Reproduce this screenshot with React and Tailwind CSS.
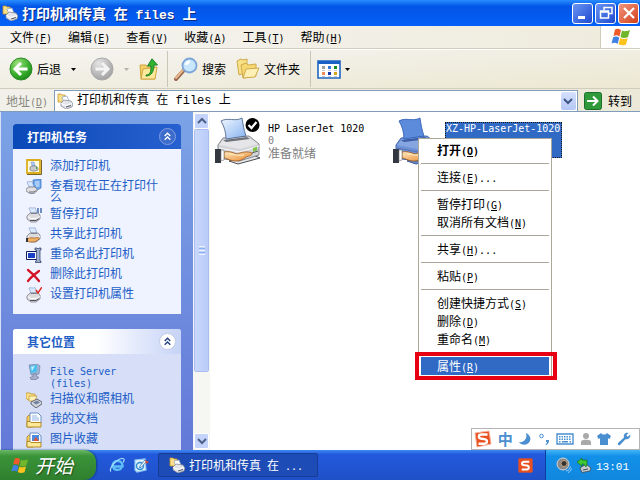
import React from "react";

const CJK = "font-['Noto_Sans_CJK_SC',sans-serif]";

/* Chinese text with Latin runs set in a half-width monospace face. "_x" marks an underlined access key. */
function Mixed({ text, latin = "text-[10px] font-['DejaVu_Sans_Mono',monospace]" }) {
  const runs = text.match(/[\x20-\x7e]+|[^\x20-\x7e]+/g) || [];
  return (
    <>
      {runs.map((run, i) => {
        if (!/^[\x20-\x7e]/.test(run)) return <span key={i}>{run}</span>;
        const [before, after] = run.split("_");
        return (
          <span key={i} className={`leading-[0px] ${latin}`}>
            {before}
            {after && (
              <>
                <u className="underline-offset-1">{after[0]}</u>
                {after.slice(1)}
              </>
            )}
          </span>
        );
      })}
    </>
  );
}

function PrinterFolderIcon({ className = "size-4" }) {
  return (
    <svg viewBox="0 0 16 16" className={`shrink-0 ${className}`} aria-hidden="true">
      <path d="M1 1h3l1 1h3v7H1z" fill="#fbe08a" stroke="#c9952c" strokeWidth=".8" />
      <path d="M5 4l5-1 2 5-5 2z" fill="#fff" stroke="#8aa0c0" strokeWidth=".7" />
      <path d="M4 10l3-3 7 1 2 3-1 3-6 2-5-3z" fill="#e2e4ea" stroke="#7d818d" strokeWidth=".7" />
      <path d="M4 10.500l5 2 6-2" fill="none" stroke="#fff" />
      <path d="M9 14l5-1.500" stroke="#50545f" />
    </svg>
  );
}

function SmallPrinter({ children }) {
  return (
    <svg viewBox="0 0 16 16" className="size-4 shrink-0" aria-hidden="true">
      <path d="M3 1c2-1 4 1 6-.5L11 6H5z" fill="#dbe9ff" stroke="#8ba3cb" strokeWidth=".7" />
      <path d="M1 9l3-3h8l2 2v4l-4 3H5l-4-3z" fill="#dcdcdf" stroke="#7e7e88" strokeWidth=".8" />
      <path d="M2 9.500l3 2h5l4-2" fill="none" stroke="#fff" />
      <path d="M4 13.500h6l3-2" fill="none" stroke="#4f4f58" />
      <path d="M5 6.500h6" stroke="#70757f" strokeWidth=".8" />
      {children}
    </svg>
  );
}

function AddPrinterIcon() {
  return (
    <svg viewBox="0 0 16 16" className="size-4 shrink-0" aria-hidden="true">
      <path d="M1 1h13v13H1z" fill="#fffbe0" stroke="#dcae1e" strokeWidth="1.800" />
      <path d="M15.500 1v14.500H1" fill="none" stroke="#6a5415" strokeWidth=".9" />
      <path d="M5 3h3l1 4H6z" fill="#a9c9ff" stroke="#7a90b8" strokeWidth=".5" />
      <path d="M4 8l2-1h4l2 2v2l-3 1H6l-2-1z" fill="#c7c9ce" stroke="#737783" strokeWidth=".7" />
      <path d="M10 8h1v2h-1z" fill="#37b13d" />
    </svg>
  );
}

function QueueIcon() {
  return (
    <svg viewBox="0 0 16 16" className="size-4 shrink-0" aria-hidden="true">
      <path d="M7 1l8-1v9l-4 2-4-3z" fill="#6ba5ec" stroke="#3a70bd" strokeWidth=".7" />
      <path d="M9 3h4.500M9 5h4.500M10 7h3.500" stroke="#e7f2ff" />
      <path d="M1 3c2-1 3 0 5-.5L8 8H3z" fill="#dbe9ff" stroke="#8ba3cb" strokeWidth=".7" />
      <path d="M0 10l3-2h6l2 2v2l-3 2.500H4L0 12z" fill="#e0e0e3" stroke="#6e6e78" strokeWidth=".7" />
      <path d="M3 13h5l2-1.500" fill="none" stroke="#4f4f58" strokeWidth=".8" />
    </svg>
  );
}

function RenameIcon() {
  return (
    <svg viewBox="0 0 16 16" className="size-4 shrink-0" aria-hidden="true">
      <path d="M.5 4.500h11v8H.5z" fill="#fff" stroke="#111c60" />
      <path d="M2 6h7v5H2z" fill="#1740c4" />
      <path d="M9 1h2l1 1 1-1h2v2h-1v11h1v1.500H9.500V14h1V3H9z" fill="#9fb1cf" stroke="#26355e" strokeWidth=".7" />
    </svg>
  );
}

function DeleteIcon() {
  return (
    <svg viewBox="0 0 16 16" className="size-4 shrink-0" aria-hidden="true">
      <path d="M2 3c4 3 8 7 11 11M13 4C9 7 5 10 2 14" fill="none" stroke="#d31226" strokeWidth="2.200" strokeLinecap="round" />
    </svg>
  );
}

function ComputerIcon() {
  return (
    <svg viewBox="0 0 16 16" className="size-4 shrink-0" aria-hidden="true">
      <path d="M3 1l8-1 3 2-1 8-8 1z" fill="#9db4d4" stroke="#7187ad" strokeWidth=".7" />
      <path d="M4 2l7-1-.500 7L5 9z" fill="#45c0ee" />
      <path d="M5 3l4-1-3 5z" fill="#c4f0ff" />
      <path d="M7 10l3-.5 1 3 2 1-3 2H5l-1-2 3-1z" fill="#a7aecb" stroke="#71799d" strokeWidth=".7" />
    </svg>
  );
}

function ScannerIcon() {
  return (
    <svg viewBox="0 0 16 16" className="size-4 shrink-0" aria-hidden="true">
      <path d="M0 1h4l1 1h4v6H2L0 6z" fill="#fbe289" stroke="#c0922e" strokeWidth=".8" />
      <path d="M3 4h8L9 9H3z" fill="#fff1b4" stroke="#c0922e" strokeWidth=".7" />
      <path d="M5 10l6-3 5 3v2l-6 4-5-4z" fill="#ced2db" stroke="#474d5c" strokeWidth=".8" />
      <path d="M7 10.500l4-2 3 2-4 2z" fill="#70829c" />
    </svg>
  );
}

function DocsIcon({ picture }) {
  return (
    <svg viewBox="0 0 16 16" className="size-4 shrink-0" aria-hidden="true">
      <path d="M1 5l2-2h4v12H1z" fill="#f7cf5a" stroke="#b1811b" strokeWidth=".8" />
      <path d="M4 1h8l3 3v7H4z" fill="#fff" stroke="#5b83bd" strokeWidth=".9" />
      {picture ? (
        <>
          <path d="M6 3h7v6H6z" fill="#4d8be0" />
          <path d="M7 9l3-4 3 4z" fill="#d9553a" />
        </>
      ) : (
        <path d="M6 4h5M6 6h7M6 8h7" stroke="#8fb4e6" />
      )}
      <path d="M1 9.500h3l1 1h10V15H1z" fill="#fde996" stroke="#b1811b" strokeWidth=".9" />
    </svg>
  );
}

function BigPrinter({ selected, badge }) {
  return (
    <svg viewBox="0 0 48 48" className="size-12 shrink-0" aria-hidden="true">
      <defs>
        <linearGradient id="paper" x1="0" y1="0" x2="1" y2="1">
          <stop offset="0" stopColor="#f2f8ff" />
          <stop offset="1" stopColor="#86b2f2" />
        </linearGradient>
        <linearGradient id="hand" x1="0" y1="0" x2="1" y2="1">
          <stop offset="0" stopColor="#ffe9c0" />
          <stop offset="1" stopColor="#e8862a" />
        </linearGradient>
      </defs>
      <path
        d="M14 44l20-8 11 5-22 6z"
        fill={selected ? "#6886c4" : "#e4e5e8"}
        stroke={selected ? "#3f5c9c" : "#4b4e55"}
      />
      <path
        d="M3 28l5-7 26-2 10 8v11l-20 6-15-2-6-6z"
        fill={selected ? "#6f92d6" : "#d3d4d8"}
        stroke={selected ? "#4468b0" : "#84878f"}
      />
      <path d="M4 28l5-6 24-2 10 7-18 5z" fill={selected ? "#86a6e2" : "#e6e6e8"} />
      <path d="M8 23l24-3 3 2-24 3z" fill={selected ? "#3b5da6" : "#6c717b"} />
      <path
        d="M6 4c7-4 14 1 21-3 1 7 2 12 4 18l-20 3C11 15 9 9 6 4z"
        fill={selected ? "#5c8bdc" : "url(#paper)"}
        stroke={selected ? "#3562b8" : "#54698c"}
        strokeWidth=".9"
      />
      <path d="M4 31l21 4 19-6" fill="none" stroke={selected ? "#5474b4" : "#fafafa"} />
      <path d="M38 31l4-1.500v4L38 35z" fill="#7fc64a" />
      <path d="M37 36l6-2" stroke="#5b5f68" />
      <path
        d="M9 35c4-1 8 0 13 2 5-2 11-3 15-1 1 2-3 3-6 4-4 4-10 5-16 3-3-1-4-2-6-2z"
        fill="url(#hand)"
        stroke="#9c5518"
        strokeWidth=".8"
      />
      <path d="M14 37c6 0 8 2 15 1" fill="none" stroke="#fff0c8" />
      <path d="M0 32h6v14H0z" fill="#33373f" />
      <path d="M6 33h3v10l-3 1z" fill="#fff" stroke="#777" strokeWidth=".6" />
      {badge && (
        <>
          <circle cx="37.500" cy="8" r="7" fill="#000" />
          <path d="M33.500 8l3 3 5-6" fill="none" stroke="#fff" strokeWidth="2.200" />
        </>
      )}
    </svg>
  );
}

function WindowsFlag({ className }) {
  return (
    <svg viewBox="0 0 20 18" className={`shrink-0 ${className}`} aria-hidden="true">
      <path d="M4 1.500C6.500 0 8 1 10 2L8.500 8.500C6.500 7 4.500 7 2.500 8z" fill="#ee5a2a" />
      <path d="M11 2.500c2 1 4.500 1 8-.5L17 9c-3 1.500-5.500 1.200-7.500 0z" fill="#71b62b" />
      <path d="M2.200 9.200c2-1 4-.8 6 .4L6.700 16C5 14.500 2.800 14.500.500 15.500z" fill="#3f80e4" />
      <path d="M9.200 10c2.300 1.200 4.500 1.200 7.500.2L15 16.500c-3 1.300-5.500 1-7.400-.3z" fill="#fbc31c" />
    </svg>
  );
}

function NavArrow({ forward }) {
  const id = forward ? "navGrey" : "navGreen";
  return (
    <svg viewBox="0 0 24 24" className="size-6 shrink-0" aria-hidden="true">
      <defs>
        <radialGradient id={id} cx=".35" cy=".25" r=".9">
          <stop offset="0" stopColor={forward ? "#e4e4e4" : "#9be078"} />
          <stop offset=".6" stopColor={forward ? "#b5b5b5" : "#35ab2a"} />
          <stop offset="1" stopColor={forward ? "#969696" : "#127a13"} />
        </radialGradient>
      </defs>
      <circle cx="12" cy="12" r="11" fill={`url(#${id})`} stroke={forward ? "#a9a9a9" : "#2c8a26"} />
      <path
        d={forward ? "M5.500 12h12M12 6l6 6-6 6" : "M18.500 12h-12M12 6l-6 6 6 6"}
        fill="none"
        stroke={forward ? "#f4f4f4" : "#fff"}
        strokeWidth="3"
      />
    </svg>
  );
}

function Caret({ className = "text-black" }) {
  return (
    <svg viewBox="0 0 5 3" className={`h-[3px] w-[5px] shrink-0 ${className}`} aria-hidden="true">
      <path d="M0 0h5L2.500 3z" fill="currentColor" />
    </svg>
  );
}

function UpFolderIcon() {
  return (
    <svg viewBox="0 0 20 22" className="h-[22px] w-5 shrink-0" aria-hidden="true">
      <path d="M1 7h6l1 2h8v12H2z" fill="#f3cf66" stroke="#d2a640" />
      <path d="M2 21l2-10 14-2-2 12z" fill="#fcea9c" stroke="#d2a640" />
      <path d="M7 17c4 0 5-3 5-9H8.500L13 .8 18.500 7H15c0 7-3 11-8 11z" fill="#32b432" stroke="#157a1d" strokeWidth=".9" />
    </svg>
  );
}

function SearchIcon() {
  return (
    <svg viewBox="0 0 24 24" className="size-6 shrink-0" aria-hidden="true">
      <path d="M2 22l8-9" stroke="#94664c" strokeWidth="4" strokeLinecap="round" />
      <path d="M2 21l8-9" stroke="#eab88c" strokeWidth="2" strokeLinecap="round" />
      <circle cx="15.500" cy="8.500" r="7" fill="#c8e7fc" stroke="#7ca5d8" strokeWidth="1.800" />
      <path d="M11 8c0-3 2-4.500 5-4.500 0 3-2 5-5 4.500z" fill="#fff" />
    </svg>
  );
}

function FoldersIcon() {
  return (
    <svg viewBox="0 0 24 22" className="h-[22px] w-6 shrink-0" aria-hidden="true">
      <path d="M1 3l4-2 2 1 4-1v13l-8 3z" fill="#f9e187" stroke="#d0a94a" />
      <path d="M5 7l5-2 2 2 8-1v12L7 20z" fill="#f6d873" stroke="#d0a94a" />
      <path d="M7 20l3-9 13-1-4 9z" fill="#fdf0b4" stroke="#d0a94a" />
    </svg>
  );
}

function ViewsIcon() {
  return (
    <svg viewBox="0 0 24 19" className="h-[19px] w-6 shrink-0" aria-hidden="true">
      <path d="M1 1h22v17H1z" fill="#fff" stroke="#1f66c0" strokeWidth="1.600" />
      <path d="M1 1h22v3H1z" fill="#1961c4" />
      <path d="M5 6h3v3H5z" fill="#9aa49a" />
      <path d="M11 6h3v3h-3z" fill="#3478dd" />
      <path d="M17 6h3v3h-3z" fill="#128a22" />
      <path d="M5 12h3v3H5z" fill="#f08a54" />
      <path d="M11 12h3v3h-3z" fill="#1537aa" />
      <path d="M17 12h3v3h-3z" fill="#d3a51a" />
      <path d="M5 10.500h3M11 10.500h3M17 10.500h3M5 16.500h3M11 16.500h3M17 16.500h3" stroke="#aab2bd" strokeWidth=".7" />
    </svg>
  );
}

function GoIcon() {
  return (
    <svg viewBox="0 0 18 18" className="size-[18px] shrink-0" aria-hidden="true">
      <rect x=".5" y=".5" width="17" height="17" rx="2" fill="#2f9a3a" stroke="#1d6f2d" />
      <path d="M3 9h10M9 4.500L13.500 9 9 13.500" fill="none" stroke="#fff" strokeWidth="2" />
    </svg>
  );
}

function Chevrons({ className }) {
  return (
    <svg viewBox="0 0 16 16" className={className} aria-hidden="true">
      <path d="M5 7.500l3-3 3 3M5 11.500l3-3 3 3" fill="none" stroke="currentColor" strokeWidth="1.500" />
    </svg>
  );
}

function SogouIcon({ className, tilted }) {
  return (
    <svg viewBox="0 0 18 18" className={`shrink-0 ${className}`} aria-hidden="true">
      <path d={tilted ? "M1 3l14-2 2 13-14 3z" : "M1 1h16v16H1z"} fill="#e9501f" stroke={tilted ? "#f6b39b" : "#e9501f"} />
      <path
        d="M13.500 4.500H7.500C4 4.500 4 8.500 7.500 8.800l3 .3c3.500.4 3 4.600 0 4.600h-6"
        fill="none"
        stroke="#fff"
        strokeWidth="2.400"
      />
    </svg>
  );
}

const menus = ["文件(_F)", "编辑(_E)", "查看(_V)", "收藏(_A)", "工具(_T)", "帮助(_H)"];

const tasks = [
  ["添加打印机", <AddPrinterIcon />],
  ["查看现在正在打印什么", <QueueIcon />],
  [
    "暂停打印",
    <SmallPrinter>
      <path d="M12 1v5M15 1v5" stroke="#4a6fae" strokeWidth="1.500" />
    </SmallPrinter>,
  ],
  [
    "共享此打印机",
    <SmallPrinter>
      <path d="M1 12c3-2 5-1 8-1 3-1 5 0 4 1-2 2-4 3-7 3s-3 0-5-1z" fill="#f0b065" stroke="#9c5c20" strokeWidth=".7" />
      <path d="M0 11h2v4H0z" fill="#333" />
    </SmallPrinter>,
  ],
  ["重命名此打印机", <RenameIcon />],
  ["删除此打印机", <DeleteIcon />],
  [
    "设置打印机属性",
    <SmallPrinter>
      <path d="M10 3l2 3 4-6" fill="none" stroke="#e02a22" strokeWidth="1.500" />
    </SmallPrinter>,
  ],
];

const places = [
  ["File Server (files)", <ComputerIcon />],
  ["扫描仪和照相机", <ScannerIcon />],
  ["我的文档", <DocsIcon />],
  ["图片收藏", <DocsIcon picture />],
];

const contextGroups = [
  ["打开(_O)"],
  ["连接(_E)..."],
  ["暂停打印(_G)", "取消所有文档(_N)"],
  ["共享(_H)..."],
  ["粘贴(_P)"],
  ["创建快捷方式(_S)", "删除(_D)", "重命名(_M)"],
  ["属性(_R)"],
];

function TaskList({ items }) {
  return (
    <ul className="flex flex-col gap-1 px-[13px] pt-2.5 pb-[11px]">
      {items.map(([label, icon]) => (
        <li key={label}>
          <a href="#" className="flex min-h-4 items-start gap-2 leading-3 text-[#215dc6]">
            {icon}
            <span className="max-w-[110px]">
              <Mixed text={label} />
            </span>
          </a>
        </li>
      ))}
    </ul>
  );
}

function CaptionButton({ label, color, children }) {
  return (
    <button
      aria-label={label}
      className={`flex size-[21px] items-center justify-center rounded-[3px] border border-white bg-linear-to-br ${color}`}
    >
      <svg viewBox="0 0 16 16" className="size-4" fill="none" stroke="#fff" aria-hidden="true">
        {children}
      </svg>
    </button>
  );
}

function TitleBar() {
  return (
    <header className="flex h-[26px] shrink-0 items-center gap-1 bg-linear-to-b from-[#2a8cff] via-[#0355e6] via-25% to-[#0460f8] pr-px pl-0.5">
      <PrinterFolderIcon />
      <h1 className="flex-1 text-[14px] leading-5 font-bold whitespace-pre text-white [text-shadow:1px_1px_#0a2a80]">
        <Mixed text="打印机和传真 在 files 上" latin="text-[13px] font-['Liberation_Mono',monospace]" />
      </h1>
      <div className="flex gap-0.5">
        <CaptionButton label="最小化" color="from-[#6c94f3] to-[#1f47cf]">
          <path d="M3 12.500h7" strokeWidth="3" />
        </CaptionButton>
        <CaptionButton label="还原" color="from-[#6c94f3] to-[#1f47cf]">
          <path d="M6 5V2.500h8v6h-3" strokeWidth="1.500" />
          <path d="M2.500 6h8v7h-8zM2 7h9" strokeWidth="1.500" />
        </CaptionButton>
        <CaptionButton label="关闭" color="from-[#f0937a] to-[#d23d13]">
          <path d="M3 3l10 10M13 3L3 13" strokeWidth="2.200" />
        </CaptionButton>
      </div>
    </header>
  );
}

function MenuBar() {
  return (
    <nav className="flex h-[23px] shrink-0 border-b border-[#d0cdbd] bg-linear-to-r from-[#f4f3f0] to-[#efecdd]">
      <div className="flex flex-1 items-center gap-4 pl-2.5">
        {menus.map((m) => (
          <button key={m} className="leading-4 whitespace-nowrap">
            <Mixed text={m} />
          </button>
        ))}
      </div>
      <div className="flex w-10 items-center justify-center border-l border-[#d0cdbd] bg-white">
        <WindowsFlag className="h-[18px] w-5" />
      </div>
    </nav>
  );
}

function ToolBar() {
  return (
    <div className="flex h-10 shrink-0 items-center border-t border-b border-t-white border-b-[#d0cdbd] bg-linear-to-br from-[#f5f4f1] to-[#ece8d2] pl-[9px]">
      <button className="flex items-center gap-1">
        <NavArrow />
        后退
      </button>
      <button aria-label="后退列表" className="ml-2.5">
        <Caret />
      </button>
      <button aria-label="前进" className="ml-3.5" disabled>
        <NavArrow forward />
      </button>
      <button aria-label="前进列表" className="ml-2.5" disabled>
        <Caret className="text-[#b5b3a8]" />
      </button>
      <button aria-label="向上" className="ml-2.5">
        <UpFolderIcon />
      </button>
      <div className="mr-1.5 ml-2 h-9 w-px bg-[#c9c6b8]" />
      <button className="flex items-center gap-1">
        <SearchIcon />
        搜索
      </button>
      <button className="ml-2.5 flex items-center gap-1">
        <FoldersIcon />
        文件夹
      </button>
      <div className="mr-1.5 ml-2.5 h-9 w-px bg-[#c9c6b8]" />
      <button aria-label="查看" className="flex items-center gap-1">
        <ViewsIcon />
        <Caret />
      </button>
    </div>
  );
}

function AddressBar() {
  return (
    <div className="flex h-[23px] shrink-0 items-center border-b border-[#7f9db9] bg-linear-to-r from-[#f1f0ea] to-[#ece9d8] pt-px pl-1.5">
      <label htmlFor="address" className="mr-1.5 leading-4 whitespace-nowrap text-[#8a887e]">
        <Mixed text="地址(_D)" />
      </label>
      <div className="flex h-[22px] min-w-0 flex-1 items-center gap-1 border border-[#7f9db9] bg-white pr-px pl-0.5">
        <PrinterFolderIcon />
        <input
          id="address"
          defaultValue="打印机和传真 在 files 上"
          className="min-w-0 flex-1 font-['Liberation_Mono','Noto_Sans_CJK_SC',monospace] text-[12px] leading-4 outline-none"
        />
        <button aria-label="展开地址" className="flex h-[18px] w-[15px] items-center justify-center rounded-[2px] bg-linear-to-b from-[#d5e0fd] to-[#b4c7f5]">
          <svg viewBox="0 0 10 8" className="h-2 w-2.5" aria-hidden="true">
            <path d="M1 2l4 4 4-4" fill="none" stroke="#3f5785" strokeWidth="2" />
          </svg>
        </button>
      </div>
      <button className="flex items-center gap-1.5 pr-2 pl-1.5">
        <GoIcon />
        转到
      </button>
    </div>
  );
}

function Sidebar() {
  return (
    <aside className="flex w-[193px] shrink-0 flex-col gap-[15px] overflow-hidden border-l border-[#d5e0f8] bg-linear-to-b from-[#7ca3e6] to-[#6479d8] px-3 pt-3">
      <section className="shrink-0 rounded-t-[3px] bg-[#eff3ff]">
        <div className="flex h-[25px] items-center justify-between rounded-t-[3px] bg-linear-to-r from-[#0a49b8] to-[#2760cf] pr-[5px] pl-3.5 text-white">
          <h2 className="font-bold">打印机任务</h2>
          <button aria-label="折叠打印机任务" className="rounded-full border border-[#7f9fe6] bg-[#3d6ccb]">
            <Chevrons className="size-[15px]" />
          </button>
        </div>
        <TaskList items={tasks} />
      </section>
      <section className="shrink-0 rounded-t-[3px] bg-[#d6dff7]">
        <div className="flex h-[25px] items-center justify-between rounded-t-[3px] bg-linear-to-r from-white via-white to-[#c6d3f7] pr-[5px] pl-3.5 text-[#215dc6]">
          <h2 className="font-bold">其它位置</h2>
          <button aria-label="折叠其它位置" className="rounded-full border border-[#c0cbe4] bg-white text-[#23407f]">
            <Chevrons className="size-[15px]" />
          </button>
        </div>
        <TaskList items={places} />
      </section>
    </aside>
  );
}

function ScrollButton({ label, d }) {
  return (
    <button aria-label={label} className="flex h-4 shrink-0 items-center justify-center rounded-[2px] border border-white bg-[#c3d3fb]">
      <svg viewBox="0 0 10 8" className="h-2 w-2.5" aria-hidden="true">
        <path d={d} fill="none" stroke="#4d6185" strokeWidth="2" />
      </svg>
    </button>
  );
}

function ScrollBar() {
  return (
    <div className="flex w-[17px] shrink-0 flex-col bg-[#f6f6f2] p-px">
      <ScrollButton label="向上滚动" d="M1 6l4-4 4 4" />
      <div className="flex min-h-0 flex-1 flex-col">
        <div className="flex basis-4/5 flex-col items-center justify-center gap-px rounded-[2px] border border-white bg-linear-to-r from-[#c9d8fc] to-[#b9cbf8] outline outline-[#a9bdf0] -outline-offset-1">
          <i className="h-px w-1.5 bg-[#eef4fe]" />
          <i className="h-px w-1.5 bg-[#8cb0f8]" />
          <i className="h-px w-1.5 bg-[#eef4fe]" />
          <i className="h-px w-1.5 bg-[#8cb0f8]" />
          <i className="h-px w-1.5 bg-[#eef4fe]" />
        </div>
      </div>
      <ScrollButton label="向下滚动" d="M1 2l4 4 4-4" />
    </div>
  );
}

function ContextMenu() {
  return (
    <div role="menu" className="absolute top-[26px] left-52 w-[134px] border border-[#aca899] bg-white p-0.5">
      {contextGroups.map((group, g) => (
        <div key={group[0]}>
          {g > 0 && <hr className="my-1 border-[#aca899]" />}
          {group.map((label) => (
            <button
              key={label}
              role="menuitem"
              className={`block h-[18px] w-full pl-4 text-left leading-[18px] whitespace-nowrap ${
                label.startsWith("打开") ? "font-bold" : ""
              } ${label.startsWith("属性") ? "bg-[#316ac5] text-white" : ""}`}
            >
              <Mixed text={label} />
            </button>
          ))}
        </div>
      ))}
      <div className="pointer-events-none absolute -right-1.5 -bottom-[3px] -left-1 h-7 border-4 border-[#e60012]" />
    </div>
  );
}

function ImeBar() {
  return (
    <div className="absolute right-0 bottom-0 flex h-[22px] w-[169px] items-center justify-between border border-[#b4b4b4] bg-white pr-2 pl-0.5 text-[#4a8fd0]">
      <SogouIcon tilted className="size-[18px]" />
      <span className="text-[15px] leading-4 font-bold">中</span>
      <svg viewBox="0 0 14 14" className="size-3.5" aria-hidden="true">
        <path d="M8 1c4 2 6 6 3 9.500C8 14 3 13 1 10c4 1 9-3 7-9z" fill="currentColor" />
      </svg>
      <svg viewBox="0 0 12 14" className="h-3.5 w-3" aria-hidden="true">
        <circle cx="3.500" cy="4" r="1.800" fill="none" stroke="currentColor" />
        <path d="M8 8h3c0 3-1 4-3 5l-.5-1c1-.5 1.500-1 1.500-2H8z" fill="currentColor" />
      </svg>
      <svg viewBox="0 0 18 12" className="h-3 w-[18px]" aria-hidden="true">
        <path d="M1 1h16v10H1z" fill="none" stroke="currentColor" strokeWidth="1.400" />
        <path d="M3 3.700h12M3 6.200h12" stroke="currentColor" strokeWidth="1.500" strokeDasharray="1.500 1" />
        <path d="M3 8.800h1.500M6 8.800h6M13.500 8.800H15" stroke="currentColor" strokeWidth="1.500" />
      </svg>
      <svg viewBox="0 0 12 14" className="h-3.5 w-3" aria-hidden="true">
        <circle cx="6" cy="4" r="3" fill="#a9a9a9" />
        <path d="M1 13V9.500C1 7 11 7 11 9.500V13z" fill="#a9a9a9" />
      </svg>
      <svg viewBox="0 0 14 14" className="size-3.5" aria-hidden="true">
        <path d="M4 1c1.500 2 4.500 2 6 0l4 3-1.500 3-1.500-.8V13H3V6.200L1.500 7 0 4z" fill="currentColor" />
      </svg>
      <svg viewBox="0 0 14 14" className="size-3.5" aria-hidden="true">
        <path d="M1 11l6-5.500C6 2.500 8.500 0 11.500 1L9.300 3.200l1.600 1.600L13.200 2.600C14 5.500 11.500 8 8.500 7.200L3 13c-1.500.8-2.800-.8-2-2z" fill="currentColor" />
      </svg>
    </div>
  );
}

function FileArea() {
  return (
    <main className="relative min-w-0 flex-1 bg-white">
      <div className="flex gap-2 pt-[5px] pl-[5px]">
        <div className="flex w-[170px] shrink-0 gap-[5px]">
          <BigPrinter badge />
          <div className="flex flex-col pt-1.5 whitespace-nowrap">
            <p className="font-['DejaVu_Sans_Mono',monospace] text-[10px] leading-3">HP LaserJet 1020</p>
            <p className="font-['DejaVu_Sans_Mono',monospace] text-[10px] leading-[11px] text-[#808080]">0</p>
            <p className="leading-3.5 text-[#808080]">准备就绪</p>
          </div>
        </div>
        <div className="flex shrink-0 items-start gap-1">
          <BigPrinter selected />
          <p className="mt-[5px] h-9 w-[117px] border border-dotted border-[#1b1b1b] bg-[#316ac5] font-['DejaVu_Sans_Mono',monospace] text-[10px] leading-3 whitespace-nowrap text-white">
            XZ-HP-LaserJet-1020
          </p>
        </div>
      </div>
      <ContextMenu />
      <ImeBar />
    </main>
  );
}

function TaskBar() {
  return (
    <footer className="flex h-[30px] shrink-0 items-stretch bg-linear-to-b from-[#3f86f3] via-[#2259dc] via-15% to-[#1f50c8] text-white">
      <button className="flex w-24 items-center gap-1.5 rounded-r-xl bg-linear-to-b from-[#6ab866] via-[#3a9438] via-20% to-[#2f7f2e] pl-[11px] shadow-[1px_0_2px_#123c8a]">
        <WindowsFlag className="h-[17px] w-[18px]" />
        <span className="text-[19px] leading-6 italic [text-shadow:1px_1px_1px_#1d4d1c]">开始</span>
      </button>
      <div className="flex w-[62px] items-center gap-2 pl-[13px]">
        <button aria-label="Internet Explorer">
          <svg viewBox="0 0 16 16" className="size-4" aria-hidden="true">
            <path d="M12.500 11C11 13.500 5 14 4 9.500h9.500C14 2.500 4.500 2 3.500 8.500" fill="none" stroke="#5fc0f8" strokeWidth="2.400" />
            <path d="M2 14.500C-1 12 8 1 14 1.500c2 .5 1 2.500 0 4" fill="none" stroke="#a8def9" strokeWidth="1.200" />
          </svg>
        </button>
        <button aria-label="显示桌面">
          <svg viewBox="0 0 16 16" className="size-4" aria-hidden="true">
            <path d="M2 3l10-1 1 11-9 2-2-2z" fill="#dff1fd" stroke="#8fcaf3" strokeWidth="1.200" />
            <circle cx="7" cy="9" r="3.500" fill="none" stroke="#2e8bd4" strokeWidth="1.400" />
            <path d="M7 9l5-6 1.500 1.500-5 5.500L6.500 11z" fill="#fff" stroke="#2874ba" strokeWidth=".8" />
            <path d="M12 3l4 2-3 2z" fill="#d9532c" />
          </svg>
        </button>
      </div>
      <button className="my-[3px] flex w-40 items-center gap-1 rounded-[2px] border border-[#173c96] bg-[#1d4cb6] pl-2.5 whitespace-nowrap">
        <PrinterFolderIcon />
        <span className="whitespace-pre">
          <Mixed text="打印机和传真 在 ..." />
        </span>
      </button>
      <div className="flex flex-1 items-center justify-end pr-3">
        <SogouIcon className="size-[15px]" />
      </div>
      <div className="flex w-[95px] items-center border-l border-[#0b3f9e] bg-linear-to-b from-[#3fb5f8] via-[#1290e8] via-20% to-[#1187de] pl-2.5">
        <svg viewBox="0 0 16 16" className="size-4" aria-hidden="true">
          <circle cx="7" cy="7" r="6" fill="#8a8a8a" stroke="#d2d2d2" />
          <circle cx="8" cy="6.500" r="3" fill="#333" stroke="#c7a579" />
          <path d="M10 14c2.500-.5 4-2 4.500-4.500M12 15.500c2-.8 3-2 3.500-4" fill="none" stroke="#bfe2ff" strokeWidth=".8" />
        </svg>
        <svg viewBox="0 0 16 16" className="ml-1 size-4" aria-hidden="true">
          <path d="M4 11l6-4 5 4-1 3-8 1.500z" fill="#c5ccd2" stroke="#3d4850" strokeWidth=".8" />
          <path d="M7 13l5-1" stroke="#3d4850" />
          <path d="M1 5l5-4v2h5v3.500L10 10 7.500 7H6v2.500z" fill="#3fc835" stroke="#156b1b" strokeWidth=".7" />
        </svg>
        <time className="ml-1">
          <Mixed text="13:01" latin="text-[11px] font-['Liberation_Mono',monospace]" />
        </time>
      </div>
    </footer>
  );
}

export default function App() {
  return (
    <div className={`flex h-screen w-full flex-col overflow-hidden bg-white text-[12px] text-black ${CJK}`}>
      <TitleBar />
      <MenuBar />
      <ToolBar />
      <AddressBar />
      <div className="flex min-h-0 flex-1">
        <Sidebar />
        <ScrollBar />
        <FileArea />
      </div>
      <TaskBar />
    </div>
  );
}
